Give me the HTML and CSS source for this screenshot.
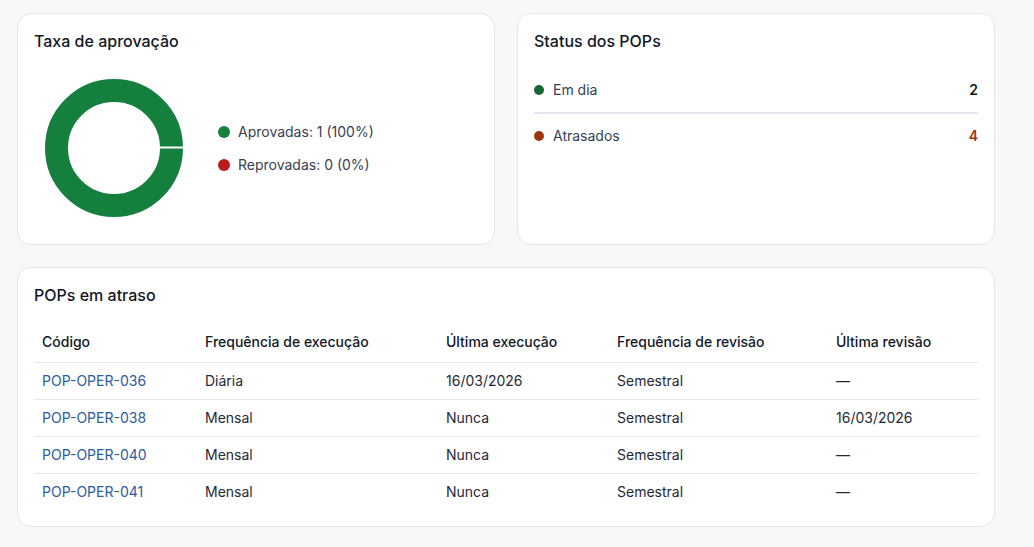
FILE: index.html
```html
<!DOCTYPE html>
<html lang="pt">
<head>
<meta charset="utf-8">
<link rel="stylesheet" href="styles.css">
</head>
<body>
<main class="page">
  <div class="top-row">
    <section class="card">
      <h2 class="card-title">Taxa de aprovação</h2>
      <div class="chart-row">
        <div class="donut-wrap">
          <svg class="donut" width="138" height="138" viewBox="0 0 138 138">
            <circle cx="69" cy="69" r="57.5" fill="none" stroke="#15803d" stroke-width="23"/>
            <line x1="114" y1="68.5" x2="139" y2="68.5" stroke="#ffffff" stroke-width="2"/>
          </svg>
        </div>
        <ul class="legend">
          <li class="legend-item"><span class="dot dot-approved"></span>Aprovadas: 1 (100%)</li>
          <li class="legend-item"><span class="dot dot-rejected"></span>Reprovadas: 0 (0%)</li>
        </ul>
      </div>
    </section>
    <section class="card">
      <h2 class="card-title">Status dos POPs</h2>
      <ul class="status-list">
        <li class="status-row">
          <span class="status-label"><span class="sdot sdot-ok"></span>Em dia</span>
          <span class="status-value">2</span>
        </li>
        <li class="status-row">
          <span class="status-label"><span class="sdot sdot-late"></span>Atrasados</span>
          <span class="status-value value-late">4</span>
        </li>
      </ul>
    </section>
  </div>
  <section class="card card-wide">
    <h2 class="card-title">POPs em atraso</h2>
    <table class="table">
      <colgroup>
        <col class="c1"><col class="c2"><col class="c3"><col class="c4"><col class="c5">
      </colgroup>
      <thead>
        <tr><th>Código</th><th>Frequência de execução</th><th>Última execução</th><th>Frequência de revisão</th><th>Última revisão</th></tr>
      </thead>
      <tbody>
        <tr><td><a class="code" href="#">POP-OPER-036</a></td><td>Diária</td><td>16/03/2026</td><td>Semestral</td><td>—</td></tr>
        <tr><td><a class="code" href="#">POP-OPER-038</a></td><td>Mensal</td><td>Nunca</td><td>Semestral</td><td>16/03/2026</td></tr>
        <tr><td><a class="code" href="#">POP-OPER-040</a></td><td>Mensal</td><td>Nunca</td><td>Semestral</td><td>—</td></tr>
        <tr><td><a class="code" href="#">POP-OPER-041</a></td><td>Mensal</td><td>Nunca</td><td>Semestral</td><td>—</td></tr>
      </tbody>
    </table>
  </section>
</main>
</body>
</html>
```
FILE: styles.css
```css
* { box-sizing: border-box; }
html, body { margin: 0; padding: 0; }
body {
  background: #f7f8fa;
  font-family: Inter, "Noto Sans", sans-serif;
  color: #1f2937;
  font-size: 14px;
}
.page {
  width: 978px;
  margin-left: 17px;
  padding-top: 13px;
  display: flex;
  flex-direction: column;
  gap: 22px;
}
.top-row {
  display: grid;
  grid-template-columns: 478px 478px;
  gap: 22px;
}
.card {
  background: #fff;
  border: 1px solid #e2e6ec;
  border-radius: 14px;
  padding: 16px;
}
.top-row .card { height: 232px; }
.card-title {
  margin: 0;
  font-size: 16px;
  line-height: 22px;
  font-weight: 500;
  color: #111827;
}
.chart-row {
  display: flex;
  align-items: center;
  margin-top: 27px;
}
.donut-wrap {
  width: 160px;
  display: flex;
  justify-content: center;
}
.donut { display: block; }
.legend {
  list-style: none;
  margin: 0 0 0 24px;
  padding: 0;
  display: flex;
  flex-direction: column;
  gap: 13px;
}
.legend-item {
  display: flex;
  align-items: center;
  gap: 8px;
  line-height: 20px;
  color: #374151;
}
.dot { width: 12px; height: 12px; border-radius: 50%; display: inline-block; }
.dot-approved { background: #15803d; }
.dot-rejected { background: #b91c1c; }
.status-list {
  list-style: none;
  margin: 16px 0 0;
  padding: 0;
}
.status-row {
  display: flex;
  justify-content: space-between;
  align-items: center;
  padding: 12px 0;
  line-height: 20px;
}
.status-row + .status-row { border-top: 2px solid #e2e8f0; }
.status-label { display: flex; align-items: center; gap: 9px; color: #334155; }
.sdot { width: 10px; height: 10px; border-radius: 50%; display: inline-block; }
.sdot-ok { background: #166534; }
.sdot-late { background: #9a3412; }
.status-value { font-weight: 600; color: #111827; }
.value-late { color: #9a3412; }
.table {
  width: 100%;
  margin-top: 16px;
  border-collapse: collapse;
  table-layout: fixed;
}
.c1 { width: 163px; }
.c2 { width: 241px; }
.c3 { width: 171px; }
.c4 { width: 219px; }
.c5 { width: 150px; }
.table th {
  text-align: left;
  font-weight: 500;
  color: #111827;
  padding: 10px 8px;
  line-height: 20px;
  border-bottom: 1px solid #e2e8f0;
}
.table td {
  padding: 8px;
  line-height: 20px;
  color: #1f2937;
  border-bottom: 1px solid #e2e8f0;
}
.table tbody tr:last-child td { border-bottom: none; }
.code { color: #2b5c9e; text-decoration: none; }
```
